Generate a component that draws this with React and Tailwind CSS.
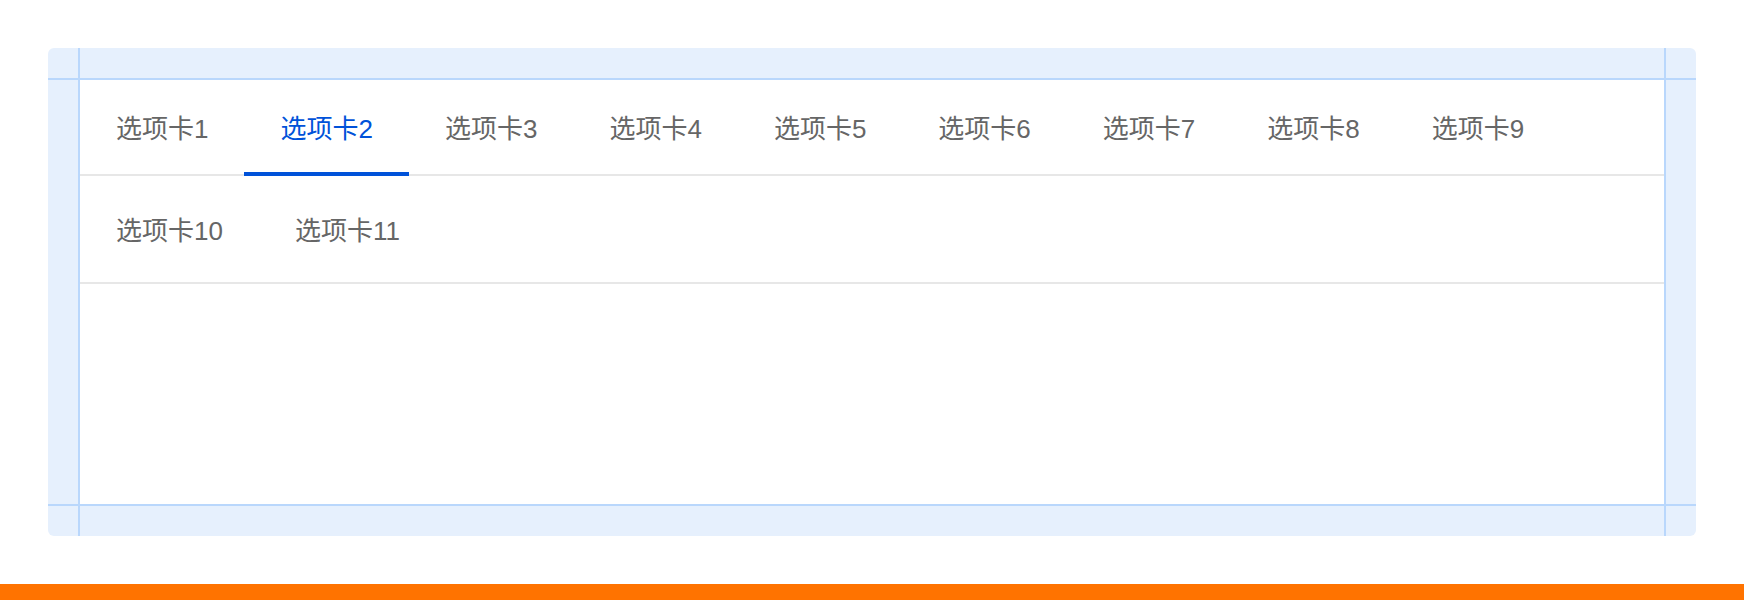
const rows = [
  ['选项卡1', '选项卡2', '选项卡3', '选项卡4', '选项卡5', '选项卡6', '选项卡7', '选项卡8', '选项卡9'],
  ['选项卡10', '选项卡11'],
]

function Tab({ label, active }) {
  return (
    <button
      type="button"
      className={`relative flex h-full items-center px-[36px] pt-[4px] text-[26px] leading-none ${active ? 'text-[#0052d9]' : 'text-[#666666]'}`}
    >
      {label}
      {active && <span className="absolute bottom-[-2px] left-0 right-0 h-[4px] bg-[#0052d9]" />}
    </button>
  )
}

export default function App() {
  const activeLabel = '选项卡2'

  return (
    <div
      className="flex h-[600px] flex-col bg-white"
      style={{ fontFamily: '"Liberation Sans", "Noto Sans CJK SC", sans-serif' }}
    >
      <div className="px-[48px] pt-[48px]">
        <div className="grid grid-cols-[30px_2px_1fr_2px_30px] grid-rows-[30px_2px_424px_2px_30px] overflow-hidden rounded-[6px] bg-[#e6f0fd]">
          <div className="col-span-5 col-start-1 row-start-2 bg-[#b9d7fc]" />
          <div className="col-span-5 col-start-1 row-start-4 bg-[#b9d7fc]" />
          <div className="col-start-2 row-span-5 row-start-1 bg-[#b9d7fc]" />
          <div className="col-start-4 row-span-5 row-start-1 bg-[#b9d7fc]" />

          <div className="col-start-3 row-start-3 bg-white">
            <div className="flex h-[96px] border-b-2 border-[#e7e7e7]">
              {rows[0].map((label) => (
                <Tab key={label} label={label} active={label === activeLabel} />
              ))}
            </div>
            <div className="flex h-[108px] border-b-2 border-[#e7e7e7]">
              {rows[1].map((label) => (
                <Tab key={label} label={label} active={label === activeLabel} />
              ))}
            </div>
          </div>
        </div>
      </div>
      <div className="mt-auto h-[16px] bg-[#ff7300]" />
    </div>
  )
}
